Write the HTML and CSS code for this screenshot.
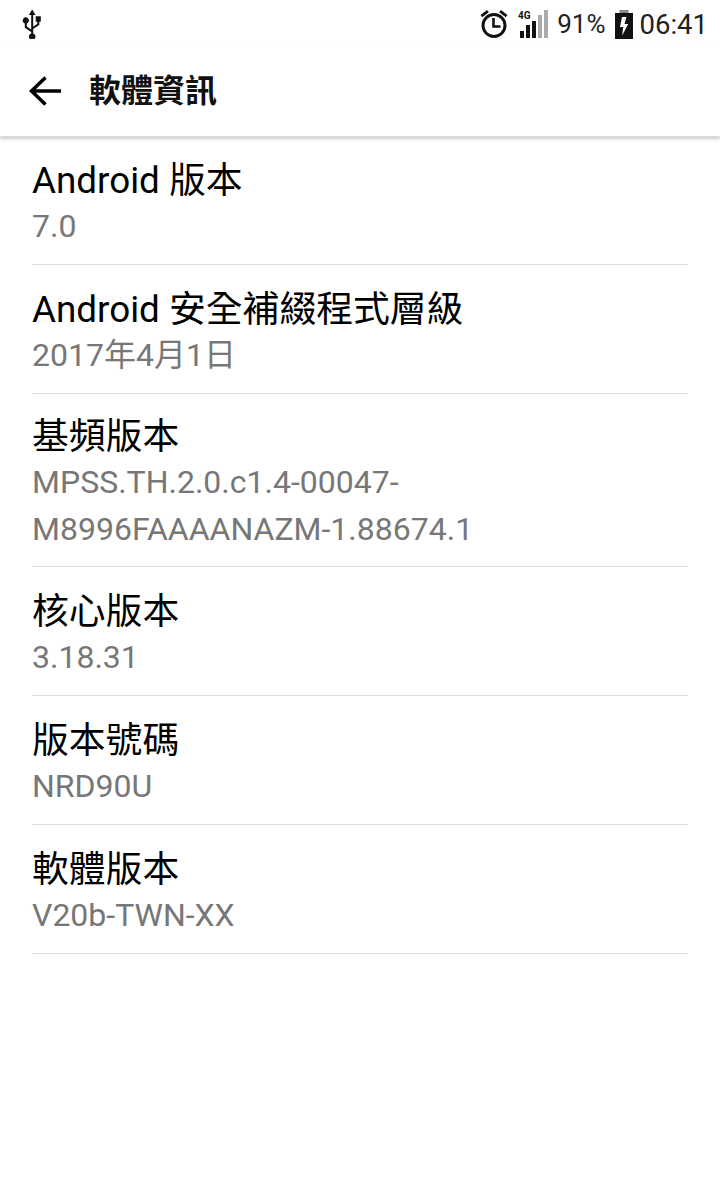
FILE: index.html
```html
<!DOCTYPE html>
<html lang="zh-Hant">
<head>
    <meta charset="UTF-8">
    <meta name="viewport" content="width=device-width, initial-scale=1.0">
    <title>軟體資訊</title>
    <link rel="stylesheet" href="styles.css">
</head>
<body>
    <div class="statusbar">
        <svg class="usb-icon" width="22" height="30" viewBox="0 0 22 30">
            <path d="M10.200 0.500L6.800 6h2.400v14.600l-4.400-3v-3.200a3.100 3.100 0 1 0-2 0v4.300l6.400 4.300v1.400a3.300 3.300 0 1 0 2 0v-4.300l6.100-4.200v-3.200h1.500v-5.500h-5.100v5.500h1.600v2.100l-4.100 2.900V6h2.400z" fill="#111"/>
        </svg>
        <div class="status-right">
            <svg class="alarm-icon" width="28" height="30" viewBox="0 0 28 30">
                <circle cx="14" cy="16.500" r="11" fill="none" stroke="#111" stroke-width="3"/>
                <path d="M13.500 9v8.500h7" fill="none" stroke="#111" stroke-width="2.600"/>
                <path d="M0.500 6L7 1l1.800 2.200-6.500 5zM27.500 6L21 1l-1.800 2.200 6.500 5z" fill="#111"/>
            </svg>
            <svg class="signal-icon" width="30" height="30" viewBox="0 0 30 30">
                <text x="0" y="10" class="net-label">4G</text>
                <rect x="2" y="22" width="4" height="7" fill="#111"/>
                <rect x="8" y="16" width="4" height="13" fill="#111"/>
                <rect x="14" y="12" width="4" height="17" fill="#111"/>
                <rect x="20" y="6" width="4" height="23" fill="#aaa"/>
                <rect x="26" y="1" width="4" height="28" fill="#aaa"/>
            </svg>
            <span class="battery-pct">91%</span>
            <svg class="battery-icon" width="18" height="29" viewBox="0 0 18 29">
                <rect x="4.500" y="0" width="9" height="3" fill="#888"/>
                <rect x="0" y="3" width="18" height="26" fill="#111"/>
                <path d="M11.500 7H7L5 17h3.200l-1 8.500 6-11.500H9.500z" fill="#fff"/>
            </svg>
            <span class="clock">06:41</span>
        </div>
    </div>

    <div class="appbar">
        <svg class="back-icon" width="34" height="34" viewBox="0 0 34 34">
            <path d="M33 17H4M17.500 3.500L3.500 17 17.500 30.500" fill="none" stroke="#000" stroke-width="3.500"/>
        </svg>
        <h1>軟體資訊</h1>
    </div>

    <div class="list">
        <div class="row">
            <div class="row-title">Android 版本</div>
            <div class="row-value">7.0</div>
        </div>
        <div class="row">
            <div class="row-title">Android 安全補綴程式層級</div>
            <div class="row-value">2017年4月1日</div>
        </div>
        <div class="row">
            <div class="row-title">基頻版本</div>
            <div class="row-value">MPSS.TH.2.0.c1.4-00047-<br>M8996FAAAANAZM-1.88674.1</div>
        </div>
        <div class="row">
            <div class="row-title">核心版本</div>
            <div class="row-value">3.18.31</div>
        </div>
        <div class="row">
            <div class="row-title">版本號碼</div>
            <div class="row-value">NRD90U</div>
        </div>
        <div class="row">
            <div class="row-title">軟體版本</div>
            <div class="row-value">V20b-TWN-XX</div>
        </div>
    </div>
</body>
</html>
```

FILE: styles.css
```css
* {
    box-sizing: border-box;
}
body {
    margin: 0;
    height: 1196px;
    overflow: hidden;
    background: #fff;
    font-family: Roboto, "Noto Sans CJK TC", sans-serif;
    color: #000;
}
.statusbar {
    height: 48px;
    display: flex;
    justify-content: space-between;
    align-items: center;
    padding: 0 12px 0 22px;
    color: #222;
}
.status-right {
    display: flex;
    align-items: center;
}
.alarm-icon {
    margin-right: 10px;
}
.net-label {
    font-size: 10px;
    font-weight: 700;
    fill: #111;
}
.battery-pct {
    font-size: 26px;
    margin-left: 9px;
    margin-right: 9px;
}
.battery-icon {
    margin-top: 1px;
}
.clock {
    font-size: 27.500px;
    margin-left: 7px;
}
.appbar {
    height: 89px;
    display: flex;
    align-items: center;
    padding: 0 0 2px 28px;
    border-bottom: 1px solid #ddd;
    box-shadow: 0 2px 3px rgba(0, 0, 0, 0.2);
    position: relative;
}
.appbar h1 {
    margin: 0 0 0 27px;
    font-size: 32px;
    font-weight: 700;
    line-height: 40px;
    color: #111;
}
.list {
    padding: 0 32px;
}
.row {
    height: 129px;
    padding-top: 22px;
    border-bottom: 1px solid #dcdcdc;
}
.row:first-child {
    height: 128px;
    padding-top: 21px;
}
.row:nth-child(3) {
    height: 173px;
    padding-top: 20px;
}
.row-title {
    font-size: 36.800px;
    line-height: 46px;
    white-space: nowrap;
}
.row-value {
    margin-top: -1px;
    font-size: 32px;
    line-height: 47px;
    color: #777;
    white-space: nowrap;
}
```
